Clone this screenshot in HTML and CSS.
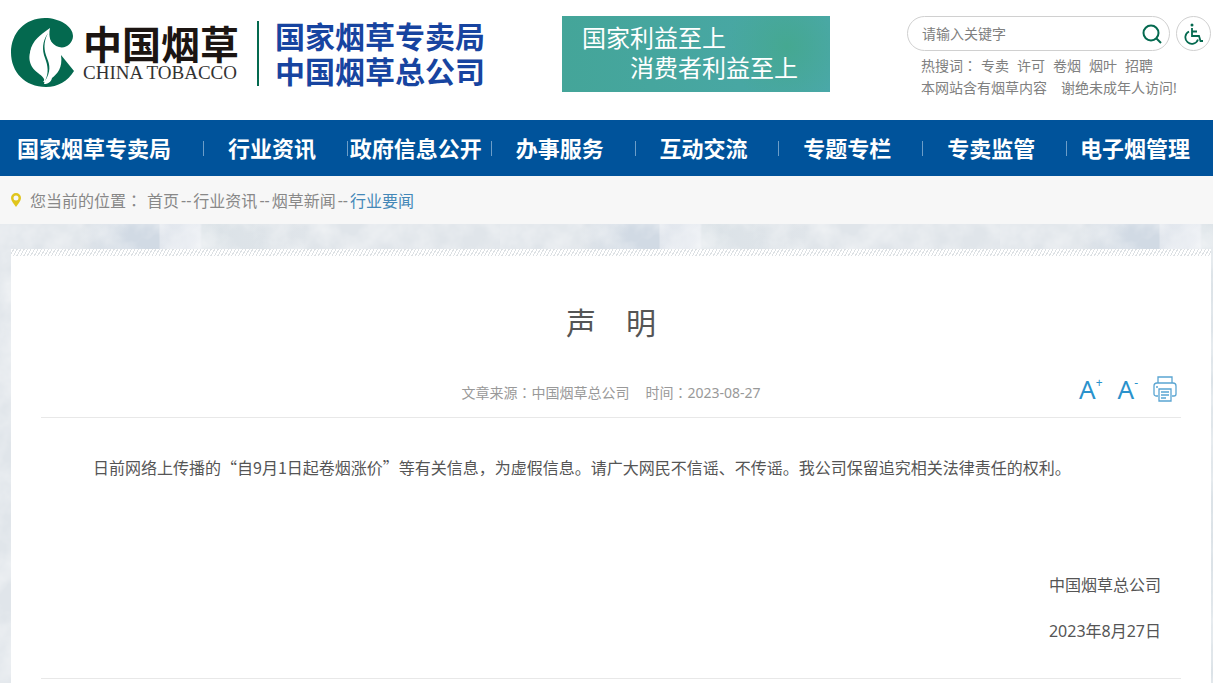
FILE: index.html
```html
<!DOCTYPE html>
<html lang="zh-CN">
<head>
    <meta charset="UTF-8">
    <meta name="viewport" content="width=device-width, initial-scale=1.0">
    <title>声明 - 中国烟草</title>
    <link rel="stylesheet" href="styles.css">
</head>
<body>

    <!-- 页头 -->
    <header class="header">
        <a class="logo" href="#">
            <svg class="logo-mark" viewBox="0 0 64 70" aria-hidden="true">
                <path fill="#04694f" d="M34 0C14 0 0 15 0 34.500C0 54 14 69 35 69C47 69 57 63 63 53L50 37C52 50 46 56 41 60C40 64 37 66 33 66C35 61 31 58 27 55C17 48 15 35 25 24C30 18 35 17 38 12C36 18 40 27 48 29C55 31 62 25 62 18C62 8 48 0 34 0Z"/>
                <path fill="#fff" d="M39 10C34 14 24 19 20 30C17 40 23 47 29 53C34 58 35 61 32 64C39 64 41 59 42 56C49 50 50 43 50 36L47 30C40 28 37 19 39 10Z"/>
                <path fill="#04694f" d="M37 15C31 24 31 32 34 40C37 48 38 55 34 63C40 54 39 47 36 40C33 32 32 25 37 15Z"/>
            </svg>
            <span class="logo-text">
                <strong class="logo-cn">中国烟草</strong>
                <span class="logo-en">CHINA TOBACCO</span>
            </span>
            <span class="org">
                <span>国家烟草专卖局</span>
                <span>中国烟草总公司</span>
            </span>
        </a>

        <div class="slogan">
            <p>国家利益至上</p>
            <p class="slogan-second">消费者利益至上</p>
        </div>

        <div class="tools">
            <div class="search-row">
                <form class="search" onsubmit="return false">
                    <input type="text" placeholder="请输入关键字" aria-label="请输入关键字">
                    <button type="submit" aria-label="搜索">
                        <svg width="20" height="20" viewBox="0 0 20 20" fill="none" stroke="#04694f" stroke-width="2">
                            <circle cx="9" cy="9" r="7.500"/>
                            <path d="M14 14l5 5"/>
                        </svg>
                    </button>
                </form>
                <a class="access" href="#" aria-label="无障碍">
                    <svg width="20" height="22" viewBox="0 0 20 22" fill="none" stroke="#04694f" stroke-width="1.800">
                        <circle cx="9" cy="2" r="1.500" fill="#04694f" stroke="none"/>
                        <path d="M9 5v8h7l1.500 5H20M9 8.500h5"/>
                        <path d="M6 8.500a6.500 6.500 0 1 0 9 8"/>
                    </svg>
                </a>
            </div>
            <p class="hot">热搜词<span class="colon" lang="zh-TW">：</span><a href="#">专卖</a><a href="#">许可</a><a href="#">卷烟</a><a href="#">烟叶</a><a href="#">招聘</a></p>
            <p class="notice"><span>本网站含有烟草内容</span><span>谢绝未成年人访问!</span></p>
        </div>
    </header>

    <!-- 导航 -->
    <nav class="nav">
        <a class="home" href="#">国家烟草专卖局</a>
        <a href="#">行业资讯</a>
        <a href="#">政府信息公开</a>
        <a href="#">办事服务</a>
        <a href="#">互动交流</a>
        <a href="#">专题专栏</a>
        <a href="#">专卖监管</a>
        <a href="#">电子烟管理</a>
    </nav>

    <!-- 当前位置 -->
    <div class="position">
        <svg width="10" height="14" viewBox="0 0 10 14" aria-hidden="true">
            <path fill="#e0c51c" fill-rule="evenodd" d="M5 0a5 5 0 0 0-5 5c0 3 3 6 5 9c2-3 5-6 5-9a5 5 0 0 0-5-5zM5 2.500a2.500 2.500 0 1 1 0 5a2.500 2.500 0 0 1 0-5z"/>
        </svg>
        <span class="position-label">您当前的位置<span class="colon" lang="zh-TW">：</span></span>
        <a href="#">首页</a>--<a href="#">行业资讯</a>--<a href="#">烟草新闻</a>--<a class="current" href="#">行业要闻</a>
    </div>

    <!-- 正文 -->
    <main class="main">
        <article class="article">
            <h1>声　明</h1>
            <div class="info">
                <p><span>文章来源<span class="colon" lang="zh-TW">：</span>中国烟草总公司</span><span class="time">时间<span class="colon" lang="zh-TW">：</span>2023-08-27</span></p>
                <div class="info-tools">
                    <button type="button" aria-label="放大字体">A<sup>+</sup></button>
                    <button type="button" aria-label="缩小字体">A<sup>-</sup></button>
                    <button type="button" aria-label="打印">
                        <svg width="24" height="26" viewBox="0 0 24 26" fill="none" stroke="#5aa5d2" stroke-width="1.300">
                            <path d="M5 7V1h14v6M5 20H3a2 2 0 0 1-2-2V10a3 3 0 0 1 3-3h16a3 3 0 0 1 3 3v8a2 2 0 0 1-2 2h-2"/>
                            <path d="M6 13h12v12H6zM8 16h8M8 19h8M8 22h5M3 11h2"/>
                        </svg>
                    </button>
                </div>
            </div>
            <div class="content">
                <p>日前网络上传播的“自9月1日起卷烟涨价”等有关信息，为虚假信息。请广大网民不信谣、不传谣。我公司保留追究相关法律责任的权利。</p>
                <div class="sign">
                    <p>中国烟草总公司</p>
                    <p>2023年8月27日</p>
                </div>
            </div>
        </article>
    </main>

</body>
</html>
```

FILE: styles.css
```css
* {
    box-sizing: border-box;
}

body {
    margin: 0;
    font-family: "Noto Sans", "Noto Sans CJK SC", sans-serif;
    font-size: 16px;
    color: #555;
    background-color: #fff;
    min-height: 100vh;
    display: flex;
    flex-direction: column;
}

p, h1 {
    margin: 0;
}

a {
    color: inherit;
    text-decoration: none;
}

button {
    border: 0;
    padding: 0;
    background: none;
    font-family: inherit;
    cursor: pointer;
}

svg {
    display: block;
}

/* 居中的冒号 */
.colon {
    font-family: "Noto Sans", "Noto Sans CJK TC", sans-serif;
}

/* 页头 */
.header {
    display: flex;
    justify-content: space-between;
    align-items: flex-start;
    height: 120px;
    padding: 16px 2px 0 11px;
}

.logo {
    display: flex;
}

.logo-mark {
    width: 64px;
    height: 70px;
    margin-top: 2px;
}

.logo-text {
    display: flex;
    flex-direction: column;
    padding: 6px 18px 0 8px;
}

.logo-cn {
    font-size: 39px;
    line-height: 43px;
    color: #1c1512;
}

.logo-en {
    font-family: "Liberation Serif", serif;
    font-size: 19px;
    line-height: 16px;
    color: #333;
}

.org {
    display: flex;
    flex-direction: column;
    justify-content: center;
    margin-top: 5px;
    height: 65px;
    padding-left: 16px;
    border-left: 2px solid #04694f;
    font-size: 30px;
    line-height: 35px;
    font-weight: bold;
    color: #1744a0;
}

.slogan {
    width: 268px;
    height: 76px;
    padding: 7px 20px;
    background: radial-gradient(circle at 84% 40%, #45a891 0, rgba(69, 168, 145, 0) 26%), linear-gradient(90deg, #44a599, #4aa8a8);
    color: #fff;
    font-size: 24px;
    line-height: 30px;
}

.slogan-second {
    padding-left: 48px;
}

.tools {
    width: 304px;
    font-size: 14px;
    line-height: 22px;
    color: #808080;
}

.search-row {
    display: flex;
    justify-content: space-between;
    margin-bottom: 4px;
}

.search {
    display: flex;
    align-items: center;
    width: 263px;
    height: 35px;
    padding: 0 7px 0 14px;
    border: 1px solid #d0d0d0;
    border-radius: 18px;
}

.search input {
    flex: 1;
    min-width: 0;
    padding: 0;
    border: 0;
    outline: none;
    font-family: inherit;
    font-size: 14px;
    color: #808080;
}

.search input::placeholder {
    color: #808080;
}

.access {
    display: flex;
    align-items: center;
    justify-content: center;
    width: 35px;
    height: 35px;
    border: 1px solid #d0d0d0;
    border-radius: 50%;
}

.hot,
.notice {
    padding-left: 14px;
    white-space: nowrap;
}

.hot a {
    margin-right: 8px;
}

.hot .colon {
    margin-right: 4px;
}

.notice span {
    margin-right: 14px;
}

/* 导航 */
.nav {
    display: flex;
    height: 56px;
    padding-right: 6px;
    background-color: #00539b;
}

.nav a {
    position: relative;
    flex: 1;
    color: #fff;
    font-size: 22px;
    line-height: 56px;
    font-weight: bold;
    text-align: center;
    white-space: nowrap;
}

.nav .home {
    flex: 0 0 200px;
    padding-right: 12px;
}

.nav a + a::before {
    content: "";
    position: absolute;
    left: 3px;
    top: 21px;
    width: 1px;
    height: 15px;
    background-color: #6c9dc8;
}

/* 当前位置 */
.position {
    display: flex;
    align-items: center;
    height: 48px;
    padding: 0 11px;
    background-color: #f7f7f7;
    color: #888;
}

.position-label {
    margin: 0 3px 0 9px;
}

.position a {
    padding: 0 2px;
}

.position .current {
    color: #4488b8;
}

/* 正文 */
.main {
    flex: 1;
    display: flex;
    padding: 25px 2px 0 11px;
    background:
        url("data:image/svg+xml,%3Csvg xmlns='http://www.w3.org/2000/svg' width='500' height='500'%3E%3Cfilter id='n'%3E%3CfeTurbulence type='fractalNoise' baseFrequency='.03' numOctaves='4' stitchTiles='stitch'/%3E%3CfeColorMatrix values='0 0 0 0 1 0 0 0 0 1 0 0 0 0 1 1 0 0 0 -.35'/%3E%3C/filter%3E%3Crect width='500' height='500' filter='url(%23n)'/%3E%3C/svg%3E"),
        linear-gradient(90deg, #e1e6ed 0, #e6eaf0 40px, #dbe2e7 42px, #e0e5ea 150px, #e0e5ea 420px, #d1dae4 470px, #d1dae4 499px, #e1e6ed 500px) 160px 0 / 500px 100%;
}

.article {
    flex: 1;
    padding: 7px 30px 0;
    background:
        repeating-linear-gradient(120deg, #fff 0, #fff 2px, #dde1e4 2px, #dde1e4 3px) top / 100% 7px no-repeat,
        #fff;
}

.article h1 {
    padding-top: 45px;
    font-size: 30px;
    line-height: 44px;
    font-weight: normal;
    text-align: center;
}

.info {
    display: grid;
    grid-template-columns: 1fr auto 1fr;
    align-items: center;
    height: 73px;
    border-bottom: 1px solid #e8e8e8;
}

.info p {
    grid-column: 2;
    padding-top: 21px;
    font-size: 14px;
    color: #999;
}

.info .time {
    margin-left: 16px;
}

.info-tools {
    display: flex;
    justify-content: flex-end;
    align-items: center;
    gap: 15px;
    padding: 16px 4px 0 0;
}

.info-tools button {
    font-size: 26px;
    line-height: 28px;
    color: #2a92cc;
}

.info-tools sup {
    font-size: 12px;
    line-height: 12px;
    vertical-align: 12px;
}

.content {
    padding: 33px 20px 24px;
    line-height: 32px;
    border-bottom: 1px solid #e8e8e8;
}

.content > p {
    font-family: "Noto Sans CJK SC", sans-serif;
    text-indent: 32px;
}

.sign {
    padding-top: 79px;
    text-align: right;
    line-height: 46px;
}
```
